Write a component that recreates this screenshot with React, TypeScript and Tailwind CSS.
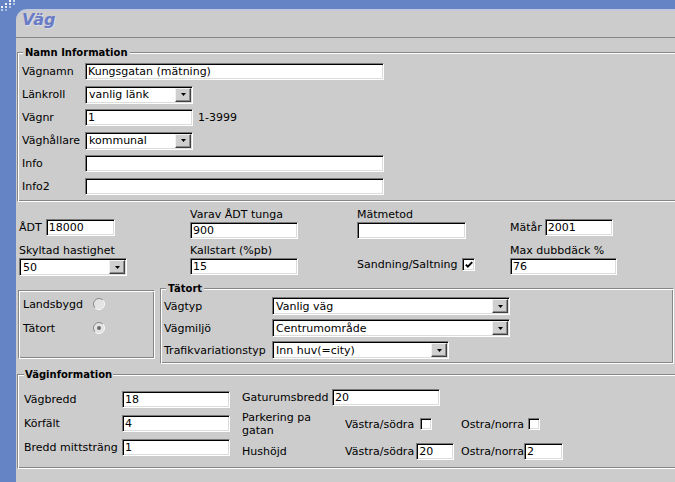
import React from "react";

const INSET =
  "bg-white border border-t-[#7a7a7a] border-l-[#7a7a7a] border-b-white border-r-white shadow-[inset_1px_1px_0_#000,inset_-1px_-1px_0_#dcdcdc]";
const GROOVE_OPEN =
  "border border-r-0 border-t-[#868686] border-l-[#868686] border-b-white shadow-[inset_1px_1px_0_#fff,inset_0_-1px_0_#868686]";
const GROOVE =
  "border border-t-[#868686] border-l-[#868686] border-r-white border-b-white shadow-[inset_1px_1px_0_#fff,inset_-1px_-1px_0_#868686]";

function Field({ w, v, ml = "" }: { w: string; v?: string; ml?: string }) {
  return (
    <div className={`${w} ${ml} h-[17px] ${INSET} flex items-center pl-[2px] whitespace-nowrap overflow-hidden shrink-0`}>
      {v}
    </div>
  );
}

function Sel({ w, v }: { w: string; v: string }) {
  return (
    <div className={`${w} h-[18px] ${INSET} flex items-stretch shrink-0`}>
      <div className="flex-1 flex items-center pl-[3px] whitespace-nowrap overflow-hidden">{v}</div>
      <div className="w-[16px] my-[1px] mr-[1px] bg-[#cfcfcf] border border-t-[#f2f2f2] border-l-[#f2f2f2] border-b-[#404040] border-r-[#404040] shadow-[inset_-1px_-1px_0_#8a8a8a] flex items-center justify-center">
        <svg width="5" height="3" viewBox="0 0 5 3">
          <path d="M0 0 H5 L2.5 3 Z" fill="#000" />
        </svg>
      </div>
    </div>
  );
}

function Check({ checked = false, size = "w-[13px] h-[13px]", ml = "" }: { checked?: boolean; size?: string; ml?: string }) {
  return (
    <div className={`${size} ${ml} ${INSET} flex items-center justify-center shrink-0`}>
      {checked && (
        <svg width="8" height="8" viewBox="0 0 8 8">
          <path d="M0.8 3.6 L2.8 5.6 L7.2 1.2" stroke="#000" strokeWidth="1.9" fill="none" />
        </svg>
      )}
    </div>
  );
}

function Radio({ checked = false }: { checked?: boolean }) {
  return (
    <svg width="12" height="12" viewBox="0 0 12 12" className="shrink-0">
      <circle cx="6" cy="6" r="5" fill="#e4e4e4" />
      <path d="M2.11 9.89 A5.5 5.5 0 0 1 9.89 2.11" stroke="#8c8c8c" fill="none" />
      <path d="M9.89 2.11 A5.5 5.5 0 0 1 2.11 9.89" stroke="#ffffff" fill="none" />
      {checked && <circle cx="6" cy="6" r="2" fill="#6a6a6a" />}
    </svg>
  );
}

function Dots() {
  const pts: [number, number, number][] = [
    [9, 0, 0.9], [13, 0, 0.7],
    [5, 3, 0.9], [9, 3, 0.9], [13, 3, 0.5],
    [1, 6, 0.9], [5, 6, 0.8], [9, 6, 0.5],
    [1, 9, 0.6], [5, 9, 0.4],
  ];
  return (
    <svg width="16" height="12" viewBox="0 0 16 12" className="absolute left-0 top-0">
      {pts.map(([x, y, o], i) => (
        <rect key={i} x={x} y={y} width="2" height="2" fill="#ffffff" opacity={o} />
      ))}
    </svg>
  );
}

function Row23({ label, children }: { label: string; children: React.ReactNode }) {
  return (
    <div className="flex items-center h-[23px]">
      <span className="w-[63px] shrink-0 whitespace-nowrap">{label}</span>
      {children}
    </div>
  );
}

function TRow({ label, children }: { label: string; children: React.ReactNode }) {
  return (
    <div className="flex items-center h-[22px]">
      <span className="w-[108px] shrink-0 whitespace-nowrap">{label}</span>
      {children}
    </div>
  );
}

function VRow({ label, children }: { label: string; children: React.ReactNode }) {
  return (
    <div className="flex items-center h-[24px]">
      <span className="w-[98px] shrink-0 whitespace-nowrap">{label}</span>
      {children}
    </div>
  );
}

export default function App() {
  return (
    <div className="w-[675px] h-[482px] overflow-hidden bg-[#6584c5] relative font-['DejaVu_Sans',Verdana,sans-serif] text-[11px] leading-[13px] text-black">
      <Dots />
      <div className="pt-[9px] pl-[16px] h-full">
        <div className="h-full bg-[#cccccc] rounded-tl-[11px] border-t-2 border-[#c3c8dc]">
          {/* header */}
          <div className="h-[27px] pl-[6px] border-b border-[#868686]">
            <div className="text-[16px] leading-[18px] font-bold italic text-[#6a7bc5] [text-shadow:1px_1px_0_#d8dbe8]">
              Väg
            </div>
          </div>

          {/* Namn Information */}
          <fieldset className={`mt-[8px] ml-[1px] pl-[4px] pt-[1px] pb-[3px] ${GROOVE_OPEN}`}>
            <legend className="ml-[1px] px-[2px] bg-[#cccccc] font-bold text-[10px] leading-[13px]">
              Namn Information
            </legend>
            <Row23 label="Vägnamn">
              <Field w="w-[299px]" v="Kungsgatan (mätning)" />
            </Row23>
            <Row23 label="Länkroll">
              <Sel w="w-[108px]" v="vanlig länk" />
            </Row23>
            <Row23 label="Vägnr">
              <Field w="w-[108px]" v="1" />
              <span className="ml-[5px]">1-3999</span>
            </Row23>
            <Row23 label="Väghållare">
              <Sel w="w-[108px]" v="kommunal" />
            </Row23>
            <Row23 label="Info">
              <Field w="w-[299px]" />
            </Row23>
            <Row23 label="Info2">
              <Field w="w-[299px]" />
            </Row23>
          </fieldset>

          {/* traffic section */}
          <div className="pt-[6px] pl-[3px] grid grid-cols-[171px_167px_153px_1fr] gap-y-[5px]">
            <div className="flex items-center pt-[8px]">
              <span>ÅDT</span>
              <Field w="w-[69px]" ml="ml-[4px]" v="18000" />
            </div>
            <div className="flex flex-col">
              <span>Varav ÅDT tunga</span>
              <div className="mt-[1px]">
                <Field w="w-[108px]" v="900" />
              </div>
            </div>
            <div className="flex flex-col">
              <span>Mätmetod</span>
              <div className="mt-[1px]">
                <Field w="w-[109px]" />
              </div>
            </div>
            <div className="flex items-center pt-[8px]">
              <span>Mätår</span>
              <Field w="w-[68px]" ml="ml-[3px]" v="2001" />
            </div>

            <div className="flex flex-col">
              <span>Skyltad hastighet</span>
              <div className="mt-[1px]">
                <Sel w="w-[108px]" v="50" />
              </div>
            </div>
            <div className="flex flex-col">
              <span>Kallstart (%pb)</span>
              <div className="mt-[1px]">
                <Field w="w-[108px]" v="15" />
              </div>
            </div>
            <div className="flex items-center pt-[14px] self-start">
              <span>Sandning/Saltning</span>
              <Check checked ml="ml-[5px]" />
            </div>
            <div className="flex flex-col">
              <span>Max dubbdäck %</span>
              <div className="mt-[1px]">
                <Field w="w-[107px]" v="76" />
              </div>
            </div>
          </div>

          {/* area section */}
          <div className="mt-[6px] pl-[2px] flex items-start gap-[5px]">
            <div className={`mt-[8px] w-[137px] h-[69px] ${GROOVE} pl-[4px] pt-[1px]`}>
              <div className="flex items-center h-[24px]">
                <span className="w-[70px]">Landsbygd</span>
                <Radio />
              </div>
              <div className="flex items-center h-[24px]">
                <span className="w-[70px]">Tätort</span>
                <Radio checked />
              </div>
            </div>
            <fieldset className={`w-[514px] pl-[3px] pb-[2px] ${GROOVE}`}>
              <legend className="ml-[2px] px-[2px] bg-[#cccccc] font-bold text-[10px] leading-[13px]">
                Tätort
              </legend>
              <TRow label="Vägtyp">
                <Sel w="w-[238px]" v="Vanlig väg" />
              </TRow>
              <TRow label="Vägmiljö">
                <Sel w="w-[238px]" v="Centrumområde" />
              </TRow>
              <TRow label="Trafikvariationstyp">
                <Sel w="w-[177px]" v="Inn huv(=city)" />
              </TRow>
            </fieldset>
          </div>

          {/* Väginformation */}
          <fieldset className={`mt-[4px] ml-[1px] pl-[6px] pt-[6px] pb-[7px] ${GROOVE_OPEN}`}>
            <legend className="px-[1px] bg-[#cccccc] font-bold text-[10px] leading-[13px]">
              Väginformation
            </legend>
            <div className="flex">
              <div className="w-[218px] shrink-0">
                <VRow label="Vägbredd">
                  <Field w="w-[108px]" v="18" />
                </VRow>
                <VRow label="Körfält">
                  <Field w="w-[108px]" v="4" />
                </VRow>
                <VRow label="Bredd mittsträng">
                  <Field w="w-[108px]" v="1" />
                </VRow>
              </div>
              <div className="flex flex-col">
                <div className="flex items-center h-[20px]">
                  <span className="w-[90px] shrink-0">Gaturumsbredd</span>
                  <Field w="w-[108px]" v="20" />
                </div>
                <div className="flex items-center h-[34px]">
                  <span className="w-[103px] shrink-0">Parkering pa gatan</span>
                  <div className="w-[116px] flex items-center">
                    <span className="whitespace-nowrap">Västra/södra</span>
                    <Check size="w-[12px] h-[12px]" ml="ml-[6px]" />
                  </div>
                  <div className="flex items-center">
                    <span className="whitespace-nowrap">Ostra/norra</span>
                    <Check size="w-[12px] h-[12px]" ml="ml-[4px]" />
                  </div>
                </div>
                <div className="flex items-center h-[20px]">
                  <span className="w-[103px] shrink-0">Hushöjd</span>
                  <div className="w-[116px] flex items-center">
                    <span className="whitespace-nowrap">Västra/södra</span>
                    <Field w="w-[38px]" ml="ml-[2px]" v="20" />
                  </div>
                  <div className="flex items-center">
                    <span className="whitespace-nowrap">Ostra/norra</span>
                    <Field w="w-[39px]" v="2" />
                  </div>
                </div>
              </div>
            </div>
          </fieldset>
        </div>
      </div>
    </div>
  );
}
